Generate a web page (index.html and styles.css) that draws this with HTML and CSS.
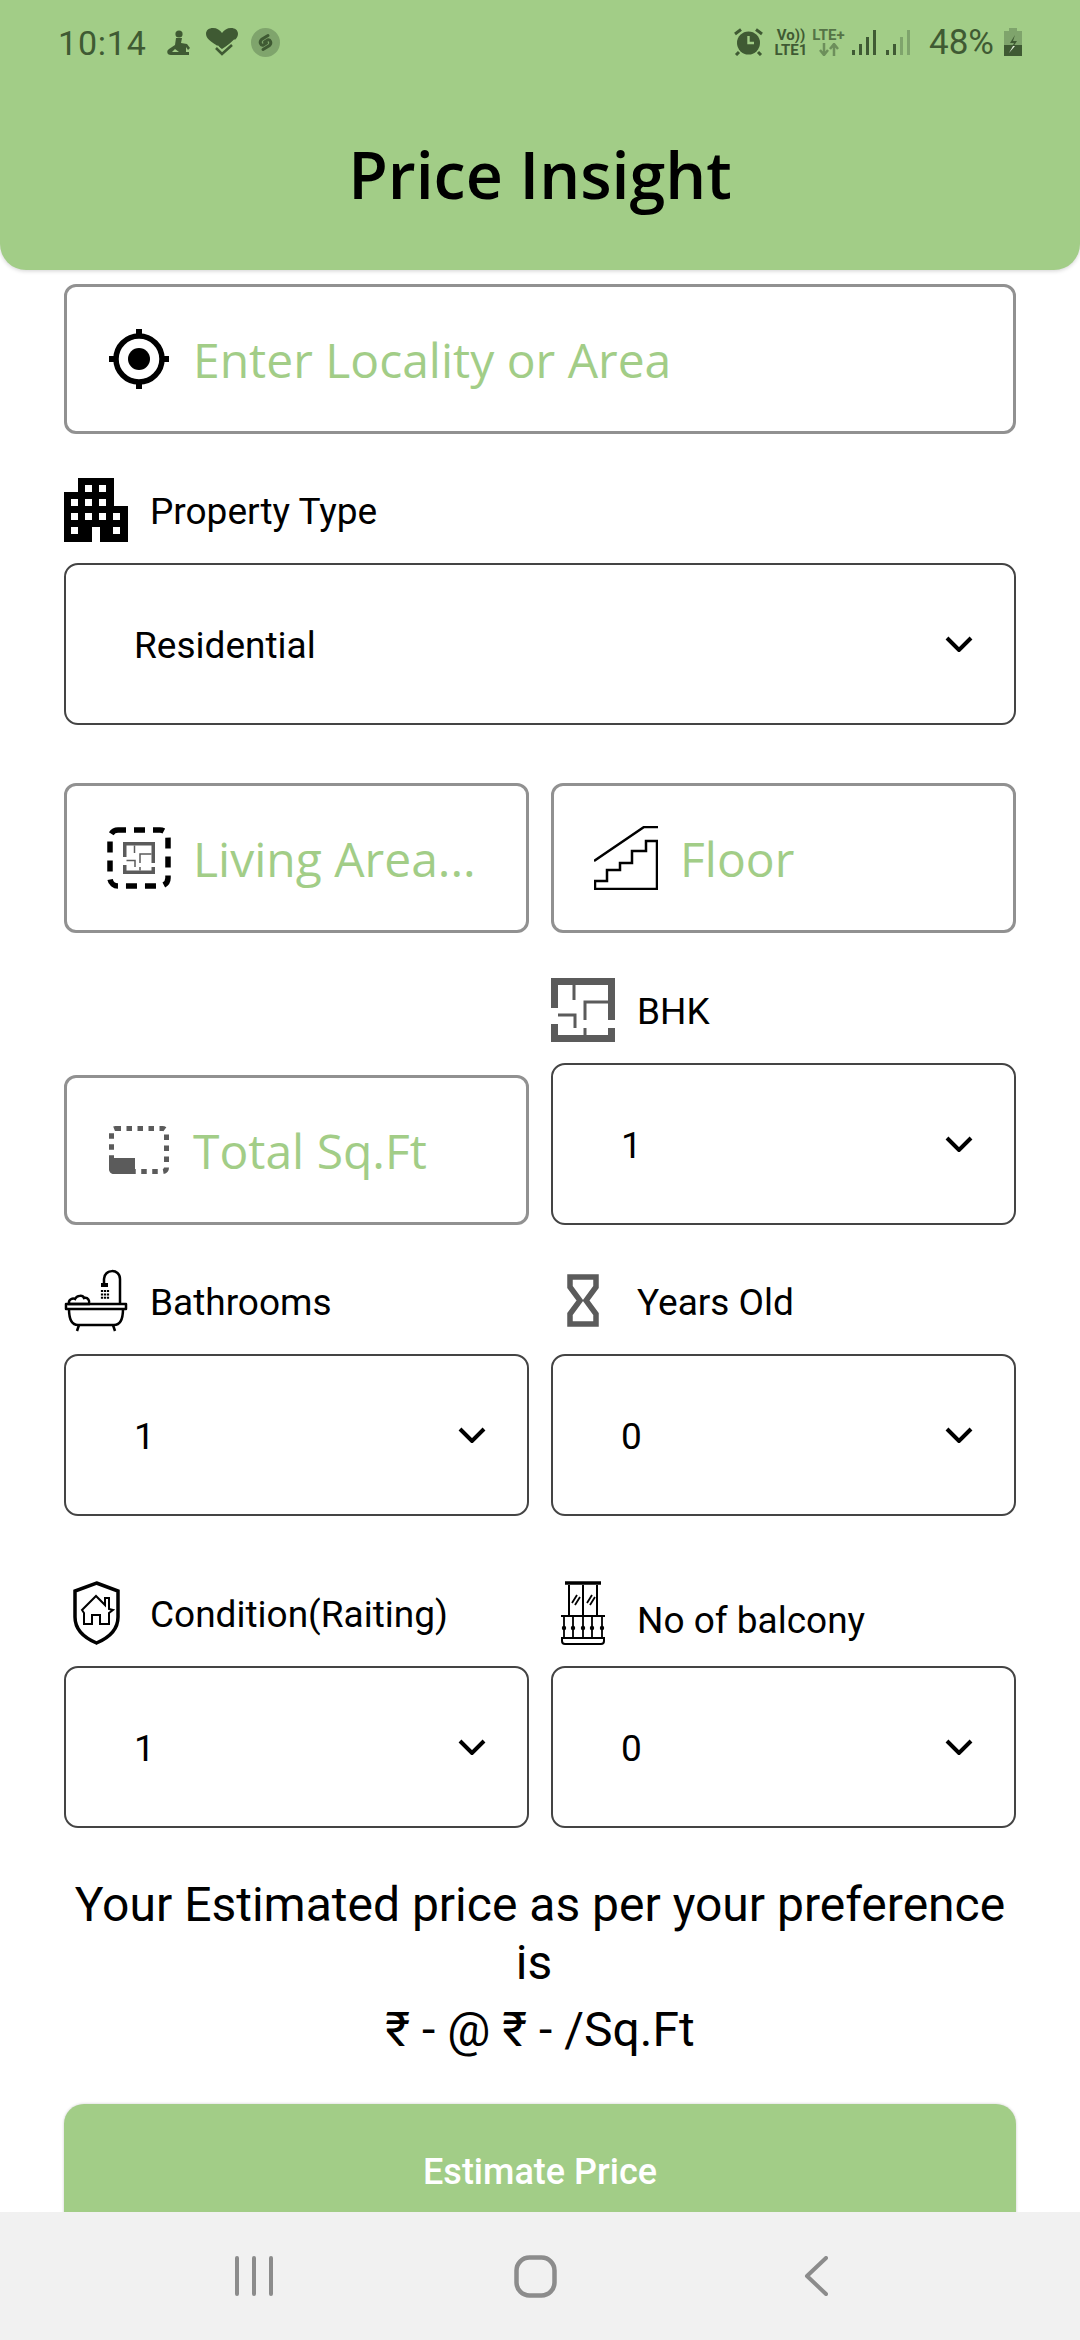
FILE: index.html
```html
<!DOCTYPE html>
<html lang="en">
<head>
    <meta charset="UTF-8">
    <meta name="viewport" content="width=device-width, initial-scale=1.0">
    <title>Price Insight</title>
    <link rel="stylesheet" href="styles.css">
</head>
<body>
    <svg class="defs" width="0" height="0">
        <symbol id="plan" viewBox="0 0 64 64">
            <path d="M3.5 30V3.5H60.5V42M60.5 50V60.5H3.5V46" fill="none" stroke="currentColor" stroke-width="7"/>
            <path d="M23 7V22M7 37H24V50M34 42V24H57M34 50V57" fill="none" stroke="currentColor" stroke-width="3"/>
        </symbol>
        <symbol id="chevron" viewBox="0 0 28 16">
            <path d="M2 2L14 14L26 2" fill="none" stroke="#000" stroke-width="4"/>
        </symbol>
    </svg>

    <div class="app">
        <header class="top">
            <div class="status">
                <span class="clock">10:14</span>
                <svg class="st-figure" width="23" height="26" viewBox="0 0 23 26">
                    <circle cx="12" cy="4" r="3.6" fill="#3f5a33"/>
                    <path d="M9 8H15L14 13L20 14L23 18L21 20L19 17V22H22V25H4C0 25 -1 21 2 19L8 15ZM8 19L5 22H12Z" fill="#3f5a33" fill-rule="evenodd"/>
                </svg>
                <svg class="st-heart" width="32" height="29" viewBox="0 0 32 29">
                    <path d="M16 21C8 15 0 12 0 6C0 2 3 0 7 0C11 0 14 2 16 5C18 2 21 0 25 0C29 0 32 2 32 6C32 12 24 15 16 21Z" fill="#3f5a33"/>
                    <path d="M10 19L16 26L30 13" fill="none" stroke="#a2cd87" stroke-width="5"/>
                    <path d="M10 20L16 26L26 17" fill="none" stroke="#3f5a33" stroke-width="2.6"/>
                </svg>
                <svg class="st-shazam" width="29" height="29" viewBox="0 0 29 29">
                    <circle cx="14.5" cy="14.5" r="14.5" fill="#7fa46c"/>
                    <path d="M17 7.500L10.500 11.500C8 14 9.500 18 12.500 17L15.500 15M12 21.500L18.500 17.500C21 15 19.500 11 16.500 12L13.500 14" fill="none" stroke="#3f5a33" stroke-width="3" stroke-linecap="round"/>
                </svg>
                <div class="status-right">
                    <svg width="29" height="28" viewBox="0 0 29 28">
                        <circle cx="14.5" cy="15" r="11.5" fill="#3f5a33"/>
                        <path d="M14.5 8V15H20" fill="none" stroke="#a2cd87" stroke-width="2.4"/>
                        <path d="M1 6L7 1.500M28 6L22 1.500M5 24L2 27M24 24L27 27" stroke="#3f5a33" stroke-width="3"/>
                    </svg>
                    <div class="net">
                        <div class="net-a">
                            <span>Vo))</span>
                            <span>LTE1</span>
                        </div>
                        <div class="net-b">
                            <span>LTE+</span>
                            <svg width="20" height="13" viewBox="0 0 20 13">
                                <path d="M5 0V11M1 7L5 12L9 7" fill="none" stroke="#6d8f5b" stroke-width="2.500"/>
                                <path d="M15 13V2M11 6L15 1L19 6" fill="none" stroke="#6d8f5b" stroke-width="2.500"/>
                            </svg>
                        </div>
                    </div>
                    <svg width="25" height="26" viewBox="0 0 25 26">
                        <path d="M1.500 20V25M8.500 14V25M15.500 7V25M22.500 0V25" stroke="#3f5a33" stroke-width="3"/>
                    </svg>
                    <svg width="25" height="26" viewBox="0 0 25 26">
                        <path d="M1.500 20V25M8.500 14V25" stroke="#3f5a33" stroke-width="3"/>
                        <path d="M15.500 7V25M22.500 0V25" stroke="#7fa46c" stroke-width="3"/>
                    </svg>
                    <span class="pct">48%</span>
                    <svg width="18" height="28" viewBox="0 0 18 28">
                        <path d="M5 0H13V3H18V28H0V3H5Z" fill="#7fa46c"/>
                        <path d="M0 17H18V28H0Z" fill="#3f5a33"/>
                        <path d="M11 7L6 15H10L5 25L13 13H9Z" fill="#3f5a33"/>
                        <path d="M9 18L5 25L11 18Z" fill="#e6f0df"/>
                    </svg>
                </div>
            </div>
            <h1 class="title">Price Insight</h1>
        </header>

        <main class="form">
            <div class="box">
                <svg class="box-icon" width="64" height="60" viewBox="0 0 64 60">
                    <circle cx="32" cy="30" r="23" fill="none" stroke="#000" stroke-width="5.500"/>
                    <circle cx="32" cy="30" r="11" fill="#000"/>
                    <path d="M32 0V8M32 52V60M2 30H10M54 30H62" stroke="#000" stroke-width="6"/>
                </svg>
                <span class="hint">Enter Locality or Area</span>
            </div>

            <div class="field gap-top">
                <div class="label">
                    <svg class="label-icon" viewBox="0 0 64 64">
                        <path d="M14 0H50V28H64V64H36V49H28V64H0V14H14Z" fill="#000"/>
                        <path d="M21 7h7v7h-7zM35 7h7v7h-7zM7 21h7v7H7zM21 21h7v7h-7zM35 21h7v7h-7zM7 35h7v7H7zM21 35h7v7h-7zM35 35h7v7h-7zM49 35h7v7h-7zM7 49h7v7H7zM49 49h7v7h-7z" fill="#fff"/>
                    </svg>
                    <span>Property Type</span>
                </div>
                <div class="select">
                    <span>Residential</span>
                    <svg class="chev"><use href="#chevron"/></svg>
                </div>
            </div>

            <div class="cols row-area">
                <div class="box">
                    <svg class="box-icon" width="64" height="62" viewBox="0 0 64 62">
                        <rect x="3" y="3" width="58" height="56" rx="8" fill="none" stroke="#000" stroke-width="5.500" stroke-dasharray="11 8" stroke-dashoffset="3"/>
                        <svg x="16" y="15" width="32" height="32" color="#5b5b5b"><use href="#plan"/></svg>
                    </svg>
                    <span class="hint">Living Area...</span>
                </div>
                <div class="box">
                    <svg class="box-icon" width="64" height="64" viewBox="0 0 64 64">
                        <path d="M0 35L50 1H64" fill="none" stroke="#000" stroke-width="2.500"/>
                        <path d="M1 63V55H13V44H26V37H38V25H52V15H63V63Z" fill="none" stroke="#000" stroke-width="2.500"/>
                    </svg>
                    <span class="hint">Floor</span>
                </div>
            </div>

            <div class="cols row-bhk">
                <div class="box">
                    <svg class="box-icon" width="64" height="48" viewBox="0 0 60 48">
                        <rect x="2.500" y="2.500" width="55" height="43" rx="4" fill="none" stroke="#5b5b5b" stroke-width="5" stroke-dasharray="5.500 5.500"/>
                        <path d="M0 32H26V48H5C2 48 0 46 0 43Z" fill="#5b5b5b"/>
                    </svg>
                    <span class="hint">Total Sq.Ft</span>
                </div>
                <div class="field">
                    <div class="label">
                        <svg class="label-icon grey"><use href="#plan"/></svg>
                        <span>BHK</span>
                    </div>
                    <div class="select">
                        <span>1</span>
                        <svg class="chev"><use href="#chevron"/></svg>
                    </div>
                </div>
            </div>

            <div class="cols row-bath">
                <div class="field">
                    <div class="label">
                        <svg class="label-icon" viewBox="0 0 64 64">
                            <path d="M2 35H62V40H2Z" fill="none" stroke="#000" stroke-width="2.500" stroke-linejoin="round"/>
                            <path d="M5 40C5 48 7 56 14 56H50C57 56 59 48 59 40" fill="none" stroke="#000" stroke-width="2.500"/>
                            <path d="M15 56L13 62M49 56L51 62" stroke="#000" stroke-width="2.500"/>
                            <path d="M5 35C4 30 9 29 11 30C13 26 19 26 20 29C24 28 26 32 25 35Z" fill="none" stroke="#000" stroke-width="2.500"/>
                            <path d="M56 35V10C56 -1 40 0 40 10V14" fill="none" stroke="#000" stroke-width="2.500"/>
                            <path d="M37 14H44V18H37Z" fill="#000"/>
                            <path d="M38 21v10M41 21v10M44 21v10" stroke="#000" stroke-width="2.200" stroke-dasharray="2 1.400" fill="none"/>
                        </svg>
                        <span>Bathrooms</span>
                    </div>
                    <div class="select">
                        <span>1</span>
                        <svg class="chev"><use href="#chevron"/></svg>
                    </div>
                </div>
                <div class="field">
                    <div class="label">
                        <svg class="label-icon" viewBox="-16 -5 64 64">
                            <path d="M3 3H29V13L19 26.500L29 40V50H3V40L13 26.500L3 13Z" fill="none" stroke="#5b5b5b" stroke-width="5.500"/>
                        </svg>
                        <span>Years Old</span>
                    </div>
                    <div class="select">
                        <span>0</span>
                        <svg class="chev"><use href="#chevron"/></svg>
                    </div>
                </div>
            </div>

            <div class="cols row-cond">
                <div class="field">
                    <div class="label">
                        <svg class="label-icon" viewBox="-9 0 64 64">
                            <path d="M23.500 2L45 10V36C45 50 33 58 23.500 62C14 58 2 50 2 36V10Z" fill="none" stroke="#000" stroke-width="3.500"/>
                            <path d="M9 29L23 15L32 24V17H36V28L40 29L36 32V43H27V34H19V43H11V32Z" fill="none" stroke="#000" stroke-width="2"/>
                        </svg>
                        <span>Condition(Raiting)</span>
                    </div>
                    <div class="select">
                        <span>1</span>
                        <svg class="chev"><use href="#chevron"/></svg>
                    </div>
                </div>
                <div class="field">
                    <div class="label low">
                        <svg class="label-icon" viewBox="-10 0 64 64">
                            <path d="M4 2H40" stroke="#000" stroke-width="3.500"/>
                            <path d="M8 4V35M22 4V35M36 4V35" fill="none" stroke="#000" stroke-width="2"/>
                            <path d="M11 22L16 14M14 24L19 16M26 22L31 14M29 24L34 16" stroke="#000" stroke-width="1.800"/>
                            <path d="M0 35H44M3 35V57M12 35V57M22 35V57M31 35V57M41 35V57" fill="none" stroke="#000" stroke-width="1.800"/>
                            <circle cx="3" cy="47" r="2.200" fill="#000"/>
                            <circle cx="12" cy="47" r="2.200" fill="#000"/>
                            <circle cx="22" cy="47" r="2.200" fill="#000"/>
                            <circle cx="31" cy="47" r="2.200" fill="#000"/>
                            <circle cx="41" cy="47" r="2.200" fill="#000"/>
                            <path d="M1 57V60C1 62 2 63 4 63H40C42 63 43 62 43 60V57H1Z" fill="none" stroke="#000" stroke-width="2"/>
                        </svg>
                        <span>No of balcony</span>
                    </div>
                    <div class="select">
                        <span>0</span>
                        <svg class="chev"><use href="#chevron"/></svg>
                    </div>
                </div>
            </div>

            <div class="result">
                <p>Your Estimated price as per your preference is&nbsp;</p>
                <p class="amount">₹ - @ ₹ - /Sq.Ft</p>
            </div>

            <button class="estimate">Estimate Price</button>
        </main>

        <nav class="bottom">
            <div class="nav-cell">
                <svg width="38" height="40" viewBox="0 0 38 40">
                    <path d="M2 2V38M19 2V38M36 2V38" stroke="#8c8c8c" stroke-width="4" stroke-linecap="round"/>
                </svg>
            </div>
            <div class="nav-cell">
                <svg width="43" height="43" viewBox="0 0 43 43">
                    <rect x="2.500" y="2.500" width="38" height="38" rx="13" fill="none" stroke="#8c8c8c" stroke-width="4.500"/>
                </svg>
            </div>
            <div class="nav-cell">
                <svg width="24" height="40" viewBox="0 0 24 40">
                    <path d="M22 2L3 20L22 38" fill="none" stroke="#8c8c8c" stroke-width="4" stroke-linecap="round" stroke-linejoin="round"/>
                </svg>
            </div>
        </nav>
    </div>
</body>
</html>
```

FILE: styles.css
```css
body {
    margin: 0;
    padding: 0;
    font-family: Roboto, sans-serif;
    background-color: #fff;
}

.defs {
    display: block;
    height: 0;
}

.app {
    width: 1080px;
    height: 2340px;
    display: flex;
    flex-direction: column;
    overflow: hidden;
}

/* Header with status bar */
.top {
    height: 270px;
    flex: none;
    display: flex;
    flex-direction: column;
    background-color: #a2cd87;
    border-radius: 0 0 26px 26px;
    box-shadow: 0 1px 4px rgba(0, 0, 0, 0.18);
    position: relative;
    z-index: 1;
}

.status {
    height: 84px;
    flex: none;
    box-sizing: border-box;
    padding: 28px 58px 0;
    display: flex;
    align-items: flex-start;
    color: #3f5a33;
}

.clock {
    font-size: 34px;
    line-height: 30px;
    margin-right: 20px;
    letter-spacing: 0.8px;
}

.st-figure {
    margin: 2px 16px 0 0;
}

.st-heart {
    margin-right: 13px;
}

.status-right {
    margin-left: auto;
    display: flex;
    align-items: flex-start;
}

.net {
    display: flex;
    font-size: 15px;
    font-weight: 700;
    line-height: 15px;
    margin: 0 7px 0 11px;
    white-space: nowrap;
}

.net-a {
    display: flex;
    flex-direction: column;
    align-items: center;
    width: 34px;
}

.net-b {
    display: flex;
    flex-direction: column;
    align-items: center;
    width: 33px;
    margin-left: 4px;
    color: #557346;
}

.status-right > svg:nth-of-type(2) {
    margin: 2px 9px 0 0;
}

.status-right > svg:nth-of-type(3) {
    margin-top: 2px;
}

.pct {
    font-size: 35px;
    line-height: 30px;
    margin: 0 10px 0 18px;
}

.title {
    flex: 1;
    margin: 0;
    padding-bottom: 6px;
    display: flex;
    align-items: center;
    justify-content: center;
    font-family: "Open Sans", sans-serif;
    font-size: 64.5px;
    font-weight: 600;
    color: #000;
}

/* Form */
.form {
    flex: 1;
    min-height: 0;
    box-sizing: border-box;
    padding: 14px 64px 0;
    display: flex;
    flex-direction: column;
    overflow: hidden;
}

.form > * {
    flex: none;
}

.box {
    height: 150px;
    box-sizing: border-box;
    border: 3px solid #919191;
    border-radius: 12px;
    padding-left: 40px;
    display: flex;
    align-items: center;
    gap: 22px;
    background-color: #fff;
}

.box-icon {
    flex: none;
}

.hint {
    font-family: "Open Sans", sans-serif;
    font-size: 48px;
    color: #a2cd87;
    white-space: nowrap;
}

.gap-top {
    margin-top: 44px;
}

.label {
    height: 64px;
    display: flex;
    align-items: center;
    gap: 22px;
    font-size: 37px;
    color: #000;
    white-space: nowrap;
}

.label span {
    padding-top: 3px;
}

.label.low span {
    padding-top: 15px;
}

.label-icon {
    width: 64px;
    height: 64px;
    flex: none;
}

.label-icon.grey {
    color: #5b5b5b;
}

.select {
    height: 162px;
    box-sizing: border-box;
    margin-top: 21px;
    border: 2px solid #444;
    border-radius: 14px;
    padding: 0 41px 0 68px;
    display: flex;
    align-items: center;
    justify-content: space-between;
    font-size: 37px;
    color: #000;
}

.select span {
    padding-top: 3px;
}

.chev {
    width: 28px;
    height: 16px;
    flex: none;
}

.cols {
    display: grid;
    grid-template-columns: 465px 465px;
    gap: 22px;
    align-items: end;
}

.row-area {
    margin-top: 58px;
}

.row-bhk {
    margin-top: 45px;
}

.row-bath {
    margin-top: 44px;
}

.row-cond {
    margin-top: 65px;
}

/* Result text and button */
.result {
    margin-top: 48px;
    text-align: center;
    font-size: 48px;
    line-height: 58px;
    color: #000;
}

.result p {
    margin: 0;
}

.result .amount {
    margin-top: 9px;
}

.estimate {
    height: 136px;
    margin-top: 45px;
    border: none;
    border-radius: 20px;
    background-color: #a2cd87;
    color: #fff;
    font-family: Roboto, sans-serif;
    font-size: 36px;
    font-weight: 500;
    box-shadow: 0 0 3px rgba(0, 0, 0, 0.2);
}

/* Android navigation bar */
.bottom {
    height: 128px;
    flex: none;
    display: flex;
    align-items: center;
    justify-content: center;
    padding: 0 10px 0 0;
    background-color: #f1f1f1;
    position: relative;
    z-index: 1;
}

.nav-cell {
    width: 281px;
    display: flex;
    justify-content: center;
}
```
